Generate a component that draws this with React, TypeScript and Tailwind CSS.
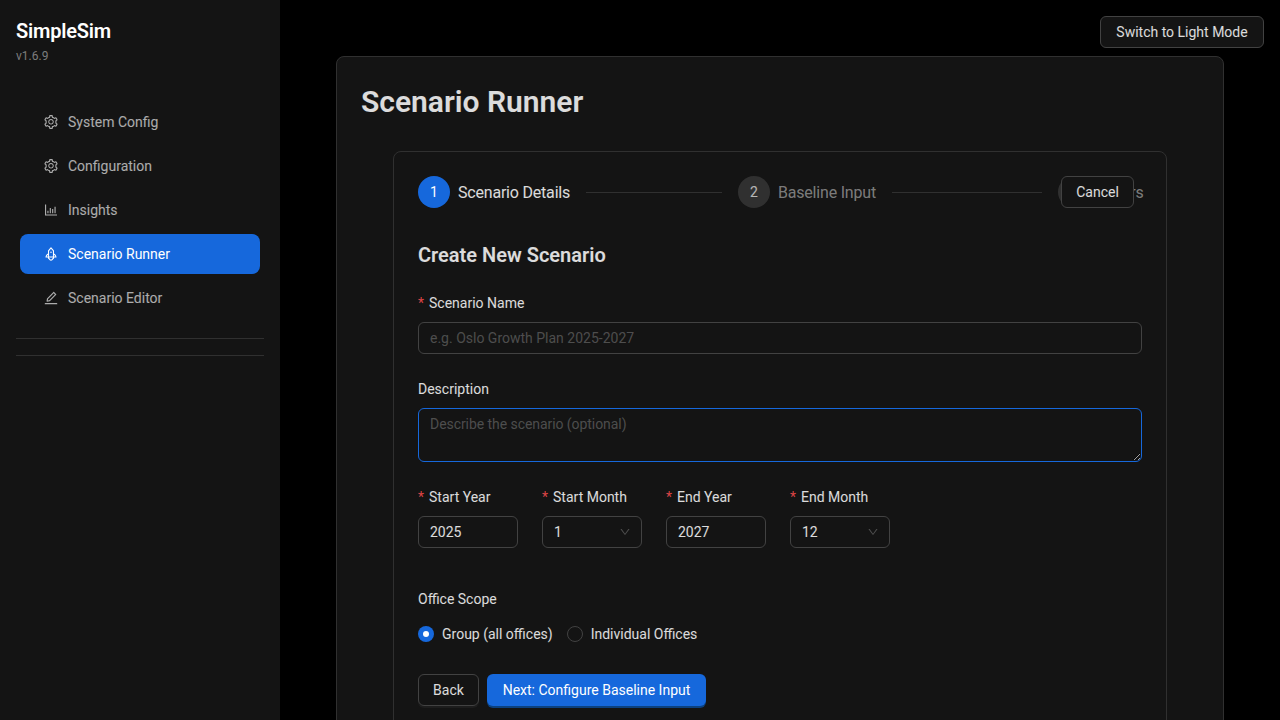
import { AiOutlineSetting, AiOutlineBarChart, AiOutlineRocket, AiOutlineEdit, AiOutlineDown } from "react-icons/ai";

const navItems = [
  { label: "System Config", icon: AiOutlineSetting },
  { label: "Configuration", icon: AiOutlineSetting },
  { label: "Insights", icon: AiOutlineBarChart },
  { label: "Scenario Runner", icon: AiOutlineRocket, active: true },
  { label: "Scenario Editor", icon: AiOutlineEdit },
];

const Sidebar = () => (
  <aside className="w-[280px] shrink-0 bg-[#141414]">
    <div className="px-4 pt-[17px] h-[98px]">
      <div className="text-xl leading-7 font-semibold tracking-[-0.2px] text-white">SimpleSim</div>
      <div className="text-xs leading-[20px] mt-[1px] text-white/45">v1.6.9</div>
    </div>
    <nav className="px-5 pt-1 flex flex-col gap-1">
      {navItems.map(({ label, icon: Icon, active }) => (
        <div
          key={label}
          className={
            active
              ? "h-10 rounded-lg pl-[23px] flex items-center gap-[9px] text-sm bg-[#1668dc] text-white"
              : "h-10 rounded-lg pl-[23px] flex items-center gap-[9px] text-sm text-white/65"
          }
        >
          <Icon size={16} />
          <span>{label}</span>
        </div>
      ))}
    </nav>
    <div className="mx-4 mt-5 h-px bg-[#303030]" />
    <div className="mx-4 mt-4 h-px bg-[#303030]" />
  </aside>
);

const Label = ({ text, required }: { text: string; required?: boolean }) => (
  <div className="h-[22px] mb-2 flex items-center text-sm text-white/85">
    {required && <span className="text-[#dc4446] mr-[5px] text-sm">*</span>}
    {text}
  </div>
);

const TextBox = ({ value }: { value: string }) => (
  <div className="w-[100px] h-8 px-[11px] flex items-center rounded-md border border-[#424242] text-sm text-white/85">
    {value}
  </div>
);

const SelectBox = ({ value }: { value: string }) => (
  <div className="w-[100px] h-8 pl-[11px] pr-[10px] flex items-center justify-between rounded-md border border-[#424242] text-sm text-white/85">
    <span>{value}</span>
    <AiOutlineDown size={12} className="text-white/25" />
  </div>
);

const Step = ({ n, title, active }: { n: number; title: string; active?: boolean }) => (
  <>
    <div
      className={
        active
          ? "w-8 h-8 rounded-full shrink-0 flex items-center justify-center text-sm bg-[#1668dc] text-white"
          : "w-8 h-8 rounded-full shrink-0 flex items-center justify-center text-sm bg-white/[0.12] text-white/65"
      }
    >
      {n}
    </div>
    <span
      className={
        active
          ? "ml-2 mt-[2px] text-base tracking-[-0.2px] text-white/85 whitespace-nowrap"
          : "ml-2 mt-[2px] text-base tracking-[-0.2px] text-white/45 whitespace-nowrap"
      }
    >
      {title}
    </span>
  </>
);

const Stepper = () => (
  <div className="flex h-8 mb-[33px]">
    <div className="flex-1 flex items-center">
      <Step n={1} title="Scenario Details" active />
      <div className="flex-1 h-px bg-[#303030] mx-4" />
    </div>
    <div className="flex-1 flex items-center">
      <Step n={2} title="Baseline Input" />
      <div className="flex-1 h-px bg-[#303030] mx-4" />
    </div>
    <div className="w-[84px] flex items-center">
      <Step n={3} title="Levers" />
    </div>
  </div>
);

export default function App() {
  return (
    <div className="h-screen overflow-hidden bg-black flex [font-family:Roboto,sans-serif]">
      <Sidebar />
      <main className="flex-1 min-w-0">
        <div className="flex justify-end pt-4 pr-4 mb-2">
          <button className="h-8 w-[164px] rounded-md border border-[#424242] bg-[#141414] text-sm text-white/85">
            Switch to Light Mode
          </button>
        </div>
        <section className="mx-14 rounded-lg border border-[#303030] bg-[#141414] p-6">
          <h2 className="text-[30px] leading-[38px] pt-[2px] font-semibold text-white/85 mb-[30px] mt-0">Scenario Runner</h2>
          <div className="relative mx-8 rounded-lg border border-[#303030] p-6">
            <Stepper />
            <button className="absolute top-6 right-8 w-[73px] h-8 rounded-md border border-[#424242] bg-[#141414] text-sm text-white/85">
              Cancel
            </button>

            <h3 className="text-xl leading-7 font-semibold text-white/85 mb-[23px]">Create New Scenario</h3>

            <Label text="Scenario Name" required />
            <input
              placeholder="e.g. Oslo Growth Plan 2025-2027"
              className="block w-full h-8 px-[11px] mb-6 rounded-md border border-[#424242] bg-transparent text-sm placeholder:text-white/25 outline-none"
            />

            <Label text="Description" />
            <textarea
              placeholder="Describe the scenario (optional)"
              className="block w-full h-[54px] px-[11px] pt-1 pb-[6px] mb-6 rounded-md border border-[#1668dc] bg-transparent text-sm tracking-[-0.06px] leading-[22px] placeholder:text-white/25 outline-none resize-y"
            />

            <div className="flex gap-6 mb-10">
              <div>
                <Label text="Start Year" required />
                <TextBox value="2025" />
              </div>
              <div>
                <Label text="Start Month" required />
                <SelectBox value="1" />
              </div>
              <div>
                <Label text="End Year" required />
                <TextBox value="2027" />
              </div>
              <div>
                <Label text="End Month" required />
                <SelectBox value="12" />
              </div>
            </div>

            <Label text="Office Scope" />
            <div className="h-8 mb-6 flex items-center text-sm text-white/85">
              <span className="w-4 h-4 rounded-full bg-[#1668dc] flex items-center justify-center">
                <span className="w-1.5 h-1.5 rounded-full bg-white" />
              </span>
              <span className="px-2 mr-[6px]">Group (all offices)</span>
              <span className="w-4 h-4 rounded-full border border-[#424242]" />
              <span className="px-2">Individual Offices</span>
            </div>

            <div className="flex gap-2 pb-6">
              <button className="h-8 w-[61px] rounded-md border border-[#424242] text-sm text-white/85 shadow-[0_2px_0_rgba(255,255,255,0.04)]">
                Back
              </button>
              <button className="h-8 w-[219px] rounded-md bg-[#1668dc] text-sm text-white shadow-[0_2px_0_rgba(5,95,200,0.6)]">
                Next: Configure Baseline Input
              </button>
            </div>
          </div>
        </section>
      </main>
    </div>
  );
}
